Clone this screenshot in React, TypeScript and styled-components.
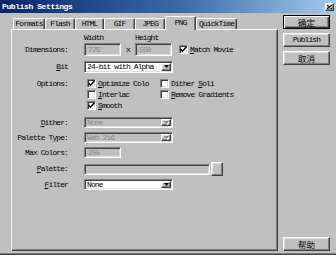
import React from "react";
import styled, { createGlobalStyle, css } from "styled-components";

const MONO = `"Liberation Mono", "DejaVu Sans Mono", monospace`;
const CJK = `"Noto Sans CJK SC", "Noto Sans CJK JP", sans-serif`;

const GlobalStyle = createGlobalStyle`
  html, body {
    margin: 0;
    padding: 0;
    background: #c0c0c0;
  }
  #root {
    width: 336px;
    height: 255px;
    overflow: hidden;
  }
`;

const raised = css`
  border: 1px solid;
  border-color: #fff #404040 #404040 #fff;
  box-shadow: inset -1px -1px #808080, inset 1px 1px #dfdfdf;
`;

const sunken = css`
  border: 1px solid;
  border-color: #808080 #fff #fff #808080;
  box-shadow: inset 1px 1px #404040, inset -1px -1px #dfdfdf;
`;

const Window = styled.div`
  width: 336px;
  height: 255px;
  box-sizing: border-box;
  background: #c0c0c0;
  display: flex;
  flex-direction: column;
  border-bottom: 1px solid #404040;
  box-shadow: inset 0 -1px #808080;
  font-family: ${MONO};
  font-size: 8px;
  letter-spacing: -0.9px;
  line-height: 1;
  color: #000;
`;

const TitleBar = styled.div`
  height: 13px;
  flex: none;
  display: flex;
  align-items: center;
  justify-content: space-between;
  padding: 0 2px 0 2px;
  background: linear-gradient(to right, #0a246a, #3a6ea5 55%, #a6caf0);
`;

const TitleText = styled.span`
  color: #fff;
  font-weight: bold;
  letter-spacing: -0.4px;
`;

const CloseButton = styled.div`
  width: 9px;
  height: 8px;
  box-sizing: border-box;
  background: #c0c0c0;
  ${raised};
  display: flex;
  align-items: center;
  justify-content: center;
`;

const Body = styled.div`
  flex: 1;
  display: flex;
  padding: 2px 6px 3px 11px;
  min-height: 0;
`;

const Main = styled.div`
  width: 267px;
  margin-top: 1px;
  display: flex;
  flex-direction: column;
`;

const TabStrip = styled.div`
  height: 13px;
  display: flex;
  align-items: flex-end;
  padding-left: 2px;
  position: relative;
  z-index: 1;
`;

const Tab = styled.div<{ $width: number; $active?: boolean }>`
  width: ${(p) => p.$width}px;
  height: ${(p) => (p.$active ? 14 : 11)}px;
  margin-bottom: ${(p) => (p.$active ? -1 : 0)}px;
  box-sizing: border-box;
  background: #c0c0c0;
  border-top: 1px solid #fff;
  border-left: 1px solid #fff;
  border-right: 1px solid #404040;
  border-radius: 2px 2px 0 0;
  box-shadow: inset -1px 0 #808080;
  display: flex;
  align-items: center;
  justify-content: center;
  padding-bottom: ${(p) => (p.$active ? 2 : 0)}px;
  position: relative;
  z-index: ${(p) => (p.$active ? 2 : 1)};
`;

const Panel = styled.div`
  flex: 1;
  box-sizing: border-box;
  border-top: 1px solid #fff;
  border-left: 1px solid #fff;
  border-right: 1px solid #404040;
  border-bottom: 1px solid #404040;
  box-shadow: inset -1px -1px #808080;
  padding-top: 3px;
  display: flex;
  flex-direction: column;
`;

const Row = styled.div<{ $height: number; $top?: number }>`
  height: ${(p) => p.$height}px;
  margin-top: ${(p) => p.$top ?? 0}px;
  display: flex;
  align-items: center;
  flex: none;
`;

const Label = styled.div`
  width: 56px;
  padding-right: 1px;
  text-align: right;
  white-space: nowrap;
`;

const Field = styled.div`
  margin-left: 15px;
  height: 100%;
  display: flex;
  align-items: center;
`;

const HeadCell = styled.div<{ $width: number }>`
  width: ${(p) => p.$width}px;
`;

const TextBox = styled.div<{ $width: number; $height?: number }>`
  width: ${(p) => p.$width}px;
  height: ${(p) => p.$height ?? 13}px;
  box-sizing: border-box;
  ${sunken};
  background: #c0c0c0;
  color: #8a8a8a;
  display: flex;
  align-items: center;
  padding-left: 3px;
`;

const Times = styled.div`
  width: 14px;
  text-align: center;
`;

const SelectBox = styled.div<{ $width: number; $disabled?: boolean }>`
  width: ${(p) => p.$width}px;
  height: 100%;
  box-sizing: border-box;
  ${sunken};
  padding: 1px;
  background: ${(p) => (p.$disabled ? "#c0c0c0" : "#fff")};
  display: flex;
  align-items: center;
`;

const SelectValue = styled.div<{ $disabled?: boolean }>`
  flex: 1;
  padding-left: 1px;
  color: ${(p) => (p.$disabled ? "#8a8a8a" : "#000")};
  white-space: nowrap;
  overflow: hidden;
`;

const DropButton = styled.div`
  width: 10px;
  height: 100%;
  box-sizing: border-box;
  background: #c0c0c0;
  ${raised};
  display: flex;
  align-items: center;
  justify-content: center;
`;

const BrowseButton = styled.div`
  width: 12px;
  height: 14px;
  margin-left: 1px;
  box-sizing: border-box;
  background: #c0c0c0;
  ${raised};
`;

const CheckRow = styled.div<{ $left?: number }>`
  display: flex;
  align-items: center;
  margin-left: ${(p) => p.$left ?? 0}px;
  white-space: nowrap;
`;

const Box = styled.div`
  width: 9px;
  height: 9px;
  box-sizing: border-box;
  ${sunken};
  background: #fff;
  display: flex;
  align-items: center;
  justify-content: center;
  margin-right: 2px;
`;

const OptionCol = styled.div<{ $width: number }>`
  width: ${(p) => p.$width}px;
  display: flex;
  padding-left: 3px;
  box-sizing: border-box;
`;

const Key = styled.span`
  text-decoration: underline;
  text-underline-offset: 1px;
`;

const Side = styled.div`
  width: 47px;
  margin-left: 5px;
  display: flex;
  flex-direction: column;
  gap: 4px;
`;

const Button = styled.div<{ $primary?: boolean; $cjk?: boolean; $bottom?: boolean }>`
  height: 14px;
  box-sizing: border-box;
  background: #c0c0c0;
  display: flex;
  align-items: center;
  justify-content: center;
  margin-top: ${(p) => (p.$bottom ? "auto" : "0")};
  font-family: ${(p) => (p.$cjk ? CJK : MONO)};
  font-size: ${(p) => (p.$cjk ? "8.5px" : "8px")};
  letter-spacing: ${(p) => (p.$cjk ? "0" : "-0.9px")};
  ${(p) =>
    p.$primary
      ? css`
          border: 1px solid #000;
          box-shadow: inset 1px 1px #fff, inset -1px -1px #404040,
            inset -2px -2px #808080;
        `
      : raised};
`;

const Arrow: React.FC<{ disabled?: boolean }> = ({ disabled }) => (
  <svg width="5" height="4" viewBox="0 0 5 4">
    {disabled && <path d="M1 1h5L3.5 4z" fill="#fff" />}
    <path d="M0 0h5L2.5 3z" fill={disabled ? "#808080" : "#000"} />
  </svg>
);

const Check: React.FC<{ on?: boolean; label: React.ReactNode; left?: number }> = ({
  on,
  label,
  left,
}) => (
  <CheckRow $left={left}>
    <Box>
      {on && (
        <svg width="7" height="7" viewBox="0 0 7 7">
          <path d="M0.5 3l2 2.2L6.5 0.8" stroke="#000" strokeWidth="1.4" fill="none" />
        </svg>
      )}
    </Box>
    <span>{label}</span>
  </CheckRow>
);

const Select: React.FC<{ value: string; disabled?: boolean }> = ({ value, disabled }) => (
  <SelectBox $width={89} $disabled={disabled}>
    <SelectValue $disabled={disabled}>{value}</SelectValue>
    <DropButton>
      <Arrow disabled={disabled} />
    </DropButton>
  </SelectBox>
);

const tabs = [
  { name: "Formats", w: 32 },
  { name: "Flash", w: 30 },
  { name: "HTML", w: 29 },
  { name: "GIF", w: 31 },
  { name: "JPEG", w: 30 },
  { name: "PNG", w: 31, active: true },
  { name: "QuickTime", w: 41 },
];

export default function App() {
  return (
    <>
      <GlobalStyle />
      <Window>
        <TitleBar>
          <TitleText>Publish Settings</TitleText>
          <CloseButton>
            <svg width="5" height="4" viewBox="0 0 5 4">
              <path d="M0 0l5 4M5 0L0 4" stroke="#000" strokeWidth="1.1" />
            </svg>
          </CloseButton>
        </TitleBar>
        <Body>
          <Main>
            <TabStrip>
              {tabs.map((t) => (
                <Tab key={t.name} $width={t.w} $active={t.active}>
                  {t.name}
                </Tab>
              ))}
            </TabStrip>
            <Panel>
              <Row $height={9}>
                <Label />
                <Field>
                  <HeadCell $width={51}>Width</HeadCell>
                  <HeadCell $width={40}>Height</HeadCell>
                </Field>
              </Row>
              <Row $height={13} $top={1}>
                <Label>Dimensions:</Label>
                <Field>
                  <TextBox $width={37}>725</TextBox>
                  <Times>x</Times>
                  <TextBox $width={37}>550</TextBox>
                  <Check
                    on
                    left={7}
                    label={
                      <>
                        <Key>M</Key>atch Movie
                      </>
                    }
                  />
                </Field>
              </Row>
              <Row $height={12} $top={5}>
                <Label>
                  <Key>B</Key>it
                </Label>
                <Field>
                  <Select value="24-bit with Alpha" />
                </Field>
              </Row>
              <Row $height={11} $top={5}>
                <Label>Options:</Label>
                <Field>
                  <OptionCol $width={76}>
                    <Check
                      on
                      label={
                        <>
                          <Key>O</Key>ptimize Colo
                        </>
                      }
                    />
                  </OptionCol>
                  <Check
                    label={
                      <>
                        Dither <Key>S</Key>oli
                      </>
                    }
                  />
                </Field>
              </Row>
              <Row $height={11}>
                <Label />
                <Field>
                  <OptionCol $width={76}>
                    <Check
                      label={
                        <>
                          <Key>I</Key>nterlac
                        </>
                      }
                    />
                  </OptionCol>
                  <Check
                    label={
                      <>
                        <Key>R</Key>emove Gradients
                      </>
                    }
                  />
                </Field>
              </Row>
              <Row $height={11}>
                <Label />
                <Field>
                  <OptionCol $width={76}>
                    <Check
                      on
                      label={
                        <>
                          <Key>S</Key>mooth
                        </>
                      }
                    />
                  </OptionCol>
                </Field>
              </Row>
              <Row $height={11} $top={6}>
                <Label>
                  <Key>D</Key>ither:
                </Label>
                <Field>
                  <Select value="None" disabled />
                </Field>
              </Row>
              <Row $height={11} $top={4}>
                <Label>Palette Type:</Label>
                <Field>
                  <Select value="Web 216" disabled />
                </Field>
              </Row>
              <Row $height={11} $top={4}>
                <Label>Max Colors:</Label>
                <Field>
                  <TextBox $width={37} $height={11}>
                    255
                  </TextBox>
                </Field>
              </Row>
              <Row $height={14} $top={4}>
                <Label>
                  <Key>P</Key>alette:
                </Label>
                <Field>
                  <TextBox $width={126} $height={11} />
                  <BrowseButton />
                </Field>
              </Row>
              <Row $height={11} $top={3}>
                <Label>
                  <Key>F</Key>ilter
                </Label>
                <Field>
                  <Select value="None" />
                </Field>
              </Row>
            </Panel>
          </Main>
          <Side>
            <Button $primary $cjk>
              确定
            </Button>
            <Button>Publish</Button>
            <Button $cjk>取消</Button>
            <Button $cjk $bottom>
              帮助
            </Button>
          </Side>
        </Body>
      </Window>
    </>
  );
}
